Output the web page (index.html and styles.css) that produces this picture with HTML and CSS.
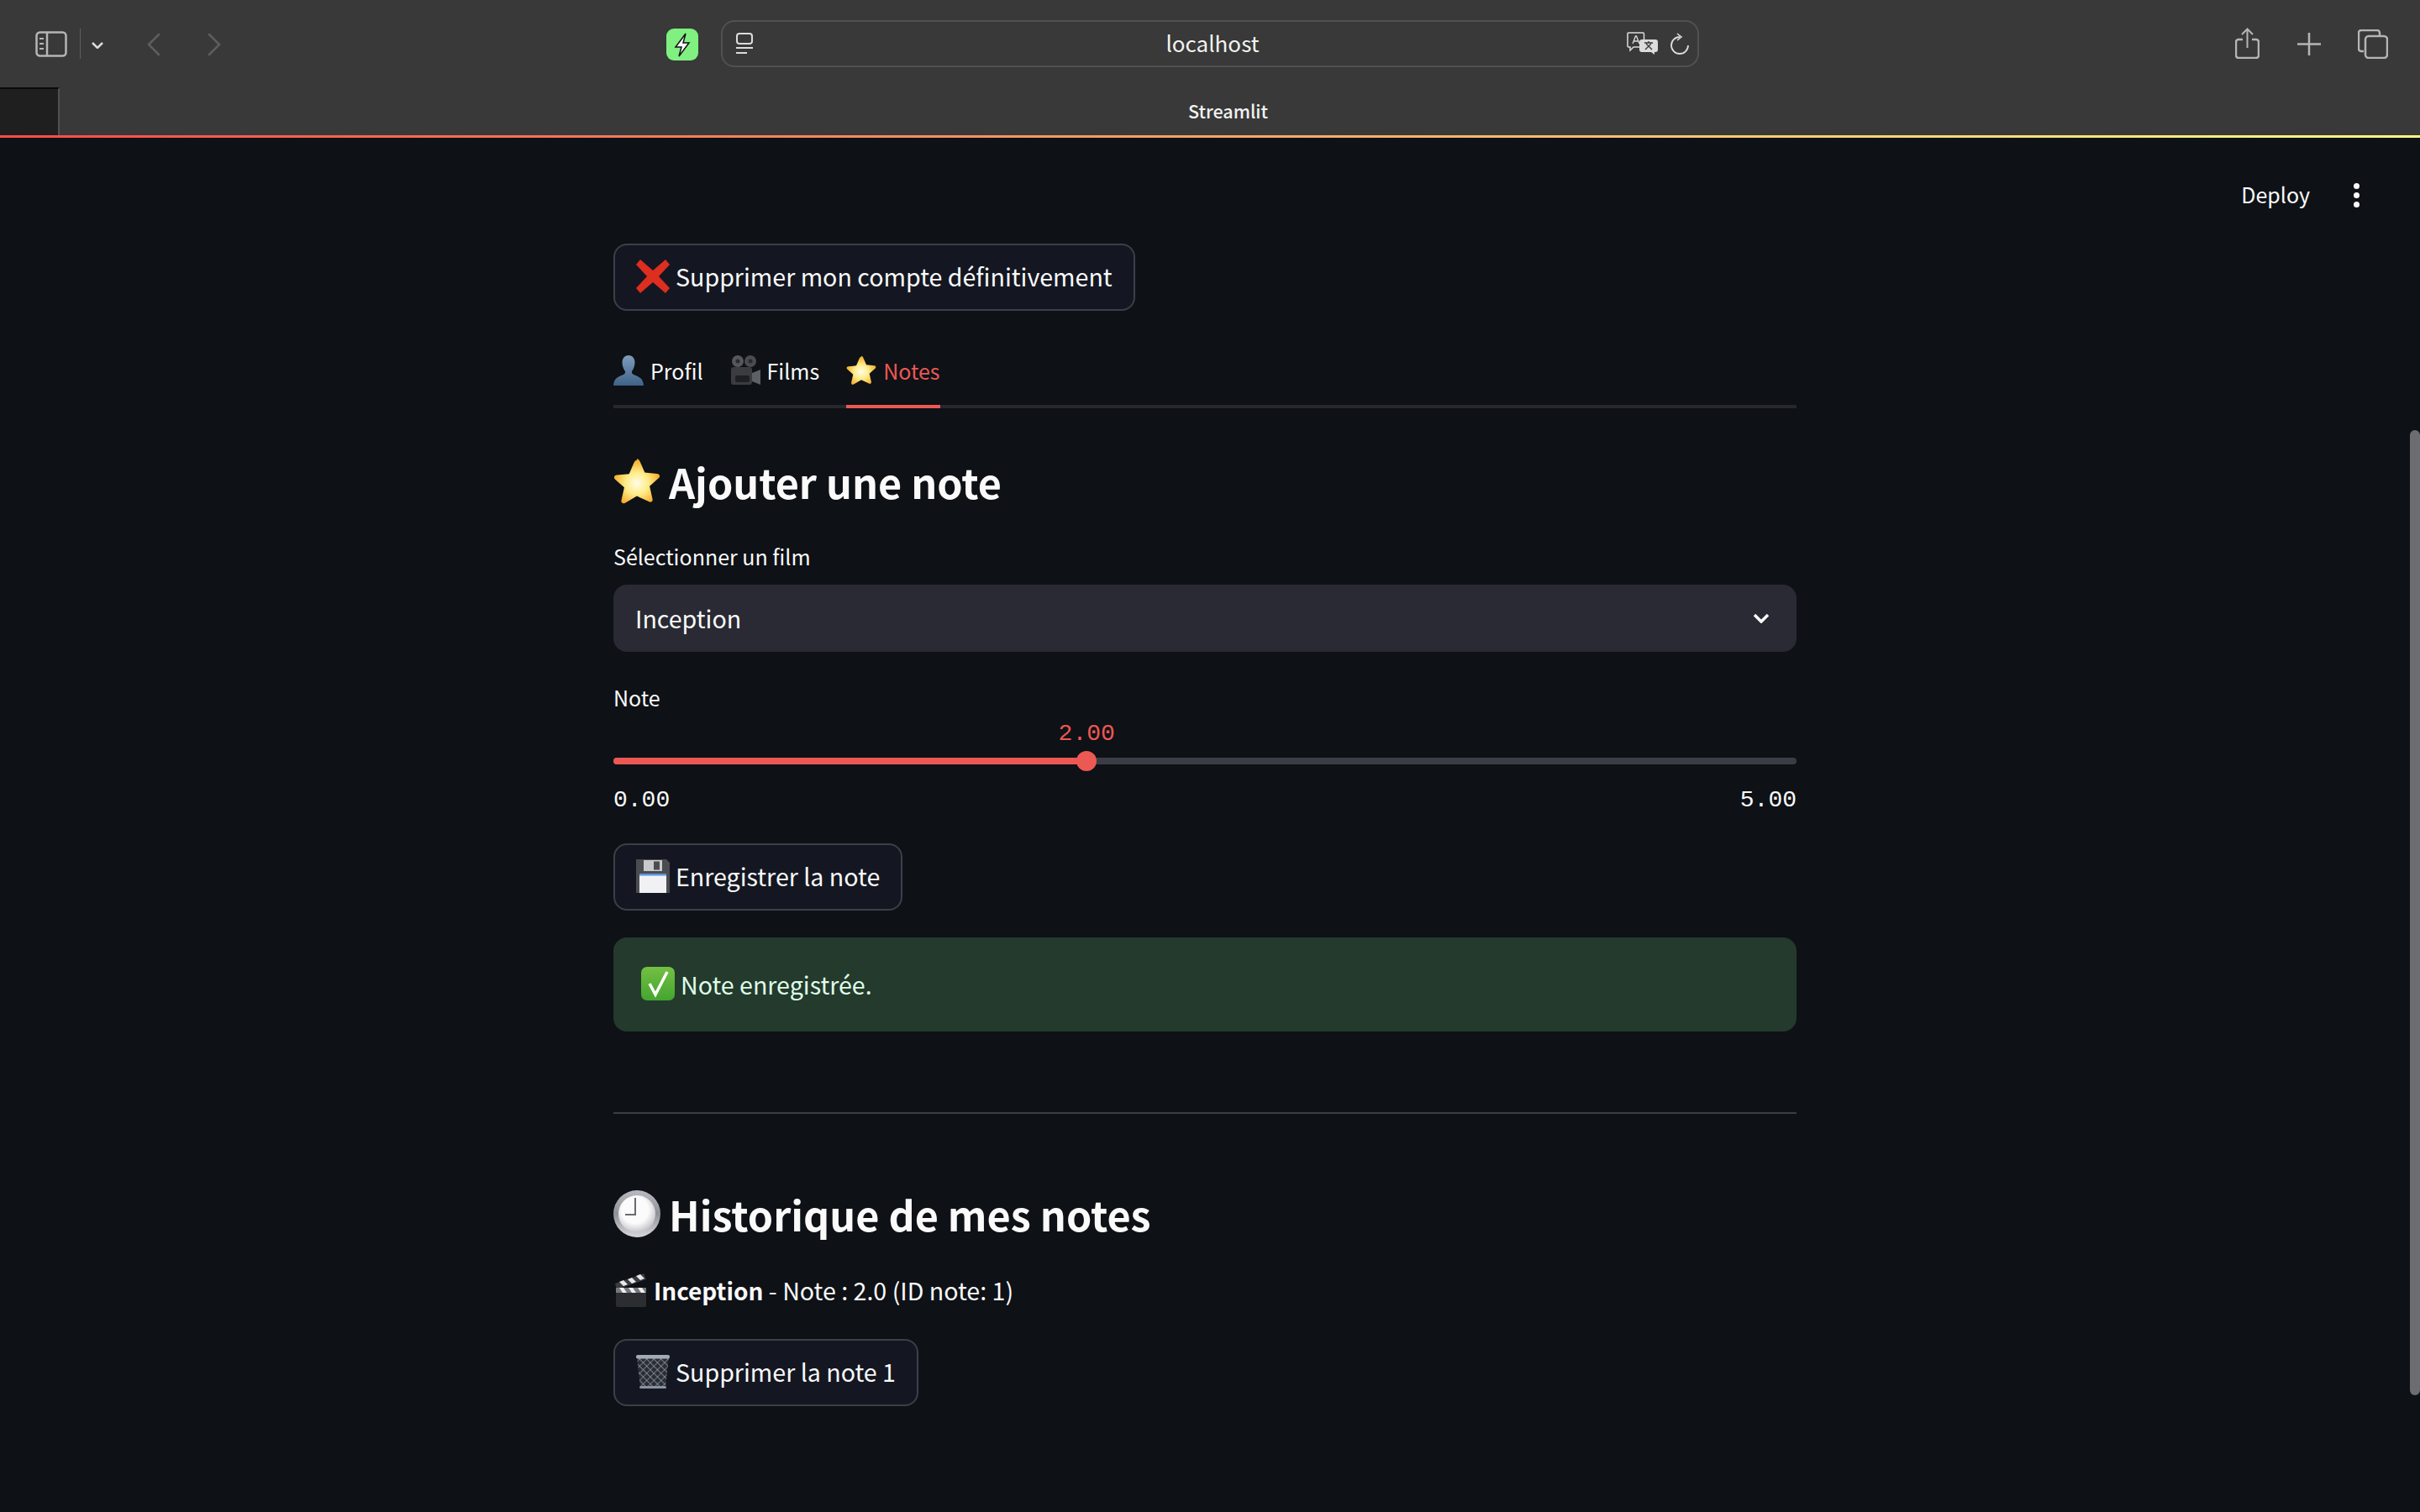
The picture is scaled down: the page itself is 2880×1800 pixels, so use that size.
FILE: index.html
```html
<!DOCTYPE html>
<html lang="fr">
<head>
    <meta charset="UTF-8">
    <title>Streamlit</title>
    <link rel="stylesheet" href="styles.css">
</head>
<body>
    <svg class="defs" width="0" height="0">
        <defs>
            <radialGradient id="starFill" cx="50%" cy="55%" r="55%">
                <stop offset="0" stop-color="#fffde8"/>
                <stop offset="0.45" stop-color="#ffec8a"/>
                <stop offset="1" stop-color="#f2a51e"/>
            </radialGradient>
            <linearGradient id="personFill" x1="0" y1="0" x2="0" y2="1">
                <stop offset="0" stop-color="#7f9dbd"/>
                <stop offset="1" stop-color="#3f6288"/>
            </linearGradient>
            <linearGradient id="clockRim" x1="0" y1="0" x2="0" y2="1">
                <stop offset="0" stop-color="#b9bbc2"/>
                <stop offset="0.5" stop-color="#8f9198"/>
                <stop offset="1" stop-color="#d8d8dc"/>
            </linearGradient>
            <radialGradient id="clockFace" cx="45%" cy="40%" r="60%">
                <stop offset="0.6" stop-color="#fbfbfb"/>
                <stop offset="1" stop-color="#c8c8cc"/>
            </radialGradient>
            <linearGradient id="checkFill" x1="0" y1="0" x2="0" y2="1">
                <stop offset="0" stop-color="#74c043"/>
                <stop offset="1" stop-color="#43a52f"/>
            </linearGradient>
            <symbol id="star" viewBox="0 0 36 36">
                <path d="M18 .8c1.100 0 1.800.9 2.300 2l3.700 8.500 9.400.9c2 .2 2.700 2 1.300 3.300l-7 6.200 2.200 9.800c.4 1.900-1.200 3-2.900 2L18 29.300 9 34.500c-1.700 1-3.300-.1-2.900-2l2.200-9.800-7-6.200c-1.400-1.300-.7-3.100 1.300-3.300l9.400-.9 3.700-8.500c.5-1.100 1.200-2 2.300-2z" fill="url(#starFill)"/>
            </symbol>
            <symbol id="cross" viewBox="0 0 40 40">
                <path d="M5 0l15 13L35 0l5 6-13 14 13 14-5 6-15-13L5 40l-5-6 13-14L0 6z" fill="#dd2e1f"/>
            </symbol>
            <symbol id="person" viewBox="0 0 36 36">
                <path d="M18 0c4.800 0 7.500 3.700 7.500 8.500 0 4.500-2 8.500-3.500 10.500-.5 2.500 1 3.500 4 4.800 5 2 9.500 4.200 10 12.200H0c.5-8 5-10.200 10-12.200 3-1.300 4.500-2.300 4-4.800-1.500-2-3.500-6-3.500-10.500C10.500 3.700 13.200 0 18 0z" fill="url(#personFill)"/>
            </symbol>
            <symbol id="camera" viewBox="0 0 36 36">
                <circle cx="9" cy="7" r="7" fill="#55575c"/>
                <circle cx="24" cy="7" r="7" fill="#4a4c50"/>
                <circle cx="9" cy="7" r="2.500" fill="#2a2b2e"/>
                <circle cx="24" cy="7" r="2.500" fill="#2a2b2e"/>
                <rect x="1" y="14" width="25" height="21" rx="3" fill="#3a3c40"/>
                <rect x="6" y="24" width="17" height="8" rx="2" fill="#1f2023"/>
                <path d="M26 21l10-4v18l-10-4z" fill="#5d6064"/>
            </symbol>
            <symbol id="floppy" viewBox="0 0 40 40">
                <path d="M0 0h36l4 4v36H0z" fill="#4b4c50"/>
                <rect x="9" y="1" width="22" height="13" fill="#c9c9cc"/>
                <rect x="21" y="2.500" width="7" height="10" fill="#4b4c50"/>
                <rect x="4" y="17" width="32" height="23" fill="#f1f1f3"/>
                <rect x="4" y="17" width="32" height="2.500" fill="#5b95dd"/>
            </symbol>
            <symbol id="check" viewBox="0 0 40 40">
                <rect width="40" height="40" rx="7" fill="url(#checkFill)"/>
                <path d="M10 20l7 13L31 6" fill="none" stroke="#fff" stroke-width="3.500"/>
            </symbol>
            <symbol id="clock" viewBox="0 0 56 56">
                <circle cx="28" cy="28" r="28" fill="url(#clockRim)"/>
                <circle cx="28" cy="28" r="22" fill="url(#clockFace)"/>
                <path d="M26 9v20H14" fill="none" stroke="#6a6a70" stroke-width="2"/>
            </symbol>
            <symbol id="clapper" viewBox="0 0 40 40">
                <path d="M1 12L35 0l3 7L3 19z" fill="#3a3b3e"/>
                <path d="M6 10l5-2 5 5-5 2zM16 7l5-2 5 5-5 2zM26 3l5-2 5 5-5 2z" fill="#e8e8e8"/>
                <rect x="2" y="17" width="36" height="23" rx="2" fill="#2c2d30"/>
                <path d="M2 17h36v6H2z" fill="#77787c"/>
                <path d="M6 17h5l4 6h-5zM17 17h5l4 6h-5zM28 17h5l4 6h-5z" fill="#eeeeee"/>
            </symbol>
            <pattern id="mesh" width="6" height="6" patternUnits="userSpaceOnUse" patternTransform="rotate(45)">
                <rect width="6" height="6" fill="#2c2e35"/>
                <path d="M0 0h6M0 0v6" stroke="#929cab" stroke-width="1.300"/>
            </pattern>
            <symbol id="trash" viewBox="0 0 40 40">
                <path d="M1 3h38l-4 35c0 1-1 2-2 2H7c-1 0-2-1-2-2z" fill="url(#mesh)"/>
                <rect x="0" y="0" width="40" height="4.500" rx="2" fill="#a3abb8"/>
                <rect x="4" y="37" width="32" height="3" rx="1.500" fill="#8992a0"/>
            </symbol>
        </defs>
    </svg>

    <header class="browser">
        <div class="browser-top">
            <svg class="ico-sidebar" viewBox="0 0 38 31" fill="none" stroke="#b4b5b4" stroke-width="2.500">
                <rect x="1.500" y="1.500" width="35" height="28" rx="4"/>
                <path d="M14 2v27"/>
                <path d="M5 9h5M5 15h5M5 21h5" stroke-width="2.200"/>
            </svg>
            <span class="sep"></span>
            <svg class="ico-chevron" viewBox="0 0 14 8" fill="none" stroke="#dcdcdc" stroke-width="2.500">
                <path d="M1 1l6 6 6-6"/>
            </svg>
            <svg class="ico-back" viewBox="0 0 16 28" fill="none" stroke="#5e5f5e" stroke-width="2.500" stroke-linecap="round">
                <path d="M14 2L2 14l12 12"/>
            </svg>
            <svg class="ico-forward" viewBox="0 0 16 28" fill="none" stroke="#5e5f5e" stroke-width="2.500" stroke-linecap="round">
                <path d="M2 2l12 12L2 26"/>
            </svg>
            <svg class="ico-favicon" viewBox="0 0 38 38">
                <rect width="38" height="38" rx="9" fill="#80f080"/>
                <path d="M23 6L11 22h7l-3 11 12-16h-7z" fill="#fff" stroke="#111" stroke-width="1.500"/>
            </svg>
            <div class="address">
                <svg class="ico-reader" viewBox="0 0 20 25" fill="none" stroke="#dcdcdc" stroke-width="2">
                    <rect x="1" y="1" width="18" height="12" rx="3"/>
                    <path d="M0 18h20M0 24h13"/>
                </svg>
                <span class="url">localhost</span>
                <svg class="ico-translate" viewBox="0 0 37 27">
                    <path d="M2 1h17a1.500 1.500 0 0 1 1.500 1.500V18H8l-4 4v-4H2A1 1 0 0 1 1 17V2a1 1 0 0 1 1-1z" fill="#383938" stroke="#dcdcdc" stroke-width="1.500"/>
                    <path d="M7 14l3.500-9h1L15 14M8.500 11h5" fill="none" stroke="#dcdcdc" stroke-width="1.300"/>
                    <path d="M18 9h16a3 3 0 0 1 3 3v9a3 3 0 0 1-3 3h-1v3l-4-3H18a3 3 0 0 1-3-3v-9a3 3 0 0 1 3-3z" fill="#dcdcdc"/>
                    <path d="M21 13h10M26 11v2M23 14l7 7M29 14l-7 7" fill="none" stroke="#383938" stroke-width="1.400"/>
                </svg>
                <svg class="ico-reload" viewBox="0 0 22 26" fill="none" stroke="#dcdcdc" stroke-width="1.800">
                    <path d="M11 5a10 10 0 1 0 10 10"/>
                    <path d="M8 1l5 4-5 4" stroke-width="1.600"/>
                </svg>
            </div>
            <svg class="ico-share" viewBox="0 0 29 37" fill="none" stroke="#b4b5b4" stroke-width="2.500">
                <path d="M9 14H4a3 3 0 0 0-3 3v16a3 3 0 0 0 3 3h21a3 3 0 0 0 3-3V17a3 3 0 0 0-3-3h-5"/>
                <path d="M14.500 24V2M8 8l6.500-6.500L21 8" stroke-width="2"/>
            </svg>
            <svg class="ico-plus" viewBox="0 0 28 27" stroke="#b4b5b4" stroke-width="2.500">
                <path d="M14 0v27M0 13.500h28"/>
            </svg>
            <svg class="ico-tabs" viewBox="0 0 36 35" fill="none" stroke="#b4b5b4" stroke-width="2.500">
                <path d="M7 26H4a3 3 0 0 1-3-3V4a3 3 0 0 1 3-3h19a3 3 0 0 1 3 3v3"/>
                <rect x="9" y="8" width="26" height="26" rx="4"/>
            </svg>
        </div>
        <div class="browser-tabs">
            <div class="tab-dark"></div>
            <div class="tab-title">Streamlit</div>
        </div>
    </header>
    <div class="decoration"></div>

    <div class="toolbar">
        <span class="deploy">Deploy</span>
        <span class="kebab"><i></i><i></i><i></i></span>
    </div>

    <main class="content">
        <button class="btn"><svg class="emoji emoji-btn"><use href="#cross"/></svg>Supprimer mon compte définitivement</button>

        <nav class="tabs">
            <a class="tab"><svg class="emoji emoji-tab"><use href="#person"/></svg>Profil</a>
            <a class="tab"><svg class="emoji emoji-tab"><use href="#camera"/></svg>Films</a>
            <a class="tab active"><svg class="emoji emoji-tab"><use href="#star"/></svg>Notes</a>
        </nav>

        <h2 class="heading first"><svg class="emoji emoji-h"><use href="#star"/></svg>Ajouter une note</h2>

        <label class="field-label select-label">Sélectionner un film</label>
        <div class="select">
            <span>Inception</span>
            <svg class="select-arrow" viewBox="0 0 20 12" fill="none" stroke="#fafafa" stroke-width="3.500">
                <path d="M2 2l8 8 8-8"/>
            </svg>
        </div>

        <label class="field-label note-label">Note</label>
        <div class="slider">
            <div class="track">
                <div class="track-fill" style="width: 40%"></div>
                <span class="thumb" style="left: 40%"></span>
                <span class="thumb-value" style="left: 40%">2.00</span>
            </div>
            <div class="slider-ends">
                <span>0.00</span>
                <span>5.00</span>
            </div>
        </div>

        <button class="btn btn-save"><svg class="emoji emoji-btn"><use href="#floppy"/></svg>Enregistrer la note</button>

        <div class="alert"><svg class="emoji emoji-btn"><use href="#check"/></svg>Note enregistrée.</div>

        <hr class="divider">

        <h2 class="heading second"><svg class="emoji emoji-h"><use href="#clock"/></svg>Historique de mes notes</h2>

        <p class="note-line"><svg class="emoji emoji-btn"><use href="#clapper"/></svg><strong>Inception</strong>&nbsp;- Note : 2.0 (ID note: 1)</p>

        <button class="btn btn-delete"><svg class="emoji emoji-btn"><use href="#trash"/></svg>Supprimer la note 1</button>
    </main>

    <div class="scrollbar"></div>
</body>
</html>
```

FILE: styles.css
```css
* {
    box-sizing: border-box;
}

html, body {
    margin: 0;
    height: 100%;
    overflow: hidden;
}

body {
    position: relative;
    background-color: #0e1116;
    color: #fafafa;
    font-family: "Noto Sans CJK SC", "Noto Sans", sans-serif;
    font-size: 28.6px;
}

.defs {
    position: absolute;
}

/* Safari */
.browser {
    height: 161px;
    background-color: #383938;
}

.browser-top {
    height: 104px;
    display: flex;
    align-items: center;
    padding-left: 42px;
}

.browser-top svg {
    flex: none;
}

.ico-sidebar { width: 38px; height: 31px; margin-top: 1px; }
.sep { width: 1px; height: 36px; margin-left: 15px; background-color: #5e5f5e; }
.ico-chevron { width: 14px; height: 8px; margin-left: 13px; margin-top: 3px; }
.ico-back { width: 16px; height: 28px; margin-left: 52px; margin-top: 1px; }
.ico-forward { width: 16px; height: 28px; margin-left: 56px; margin-top: 1px; }
.ico-favicon { width: 38px; height: 38px; margin-left: 530px; margin-top: 1px; }

.address {
    width: 1164px;
    height: 56px;
    margin-left: 27px;
    padding: 0 10px 0 16px;
    display: flex;
    align-items: center;
    border: 2px solid #505150;
    border-radius: 16px;
    margin-top: -1px;
}

.url {
    flex: 1;
    text-align: center;
    font-size: 26px;
    color: #f2f2f2;
    padding-left: 54px;
    padding-bottom: 2px;
}

.ico-reader { width: 20px; height: 25px; }
.ico-translate { width: 37px; height: 27px; }
.ico-reload { width: 22px; height: 26px; margin-left: 15px; }
.ico-share { width: 29px; height: 37px; margin-left: 638px; margin-top: -2px; }
.ico-plus { width: 28px; height: 27px; margin-left: 45px; margin-top: 1px; }
.ico-tabs { width: 36px; height: 35px; margin-left: 44px; }

.browser-tabs {
    height: 57px;
    display: flex;
    position: relative;
}

.tab-dark {
    width: 71px;
    background-color: #1e1f1e;
    border-top: 2px solid #0a0a0a;
    border-right: 2px solid #505150;
}

.tab-title {
    flex: 1;
    padding-right: 28px;
    text-align: center;
    font-size: 21.5px;
    line-height: 56px;
    color: #f2f2f2;
    font-weight: 500;
}

.decoration {
    height: 3px;
    background: linear-gradient(90deg, #ff4b4b, #fffd80);
}

/* Streamlit */
.toolbar {
    position: absolute;
    top: 209px;
    right: 72px;
    display: flex;
    align-items: center;
    height: 44px;
    font-size: 25px;
}

.deploy {
    margin-right: 52px;
}

.kebab {
    display: flex;
    flex-direction: column;
    gap: 4px;
    margin-top: 2px;
}

.kebab i {
    width: 7px;
    height: 7px;
    border-radius: 50%;
    background-color: #fafafa;
}

.content {
    width: 1408px;
    margin-left: 730px;
    padding-top: 126px;
    display: flex;
    flex-direction: column;
    align-items: flex-start;
}

.emoji {
    flex: none;
}

.emoji-btn {
    width: 40px;
    height: 40px;
    margin-right: 7px;
}

.emoji-tab {
    width: 36px;
    height: 36px;
    margin-right: 8px;
}

.emoji-h {
    width: 56px;
    height: 56px;
    margin-right: 10px;
}

.btn {
    height: 80px;
    padding: 0 25px 3px 25px;
    display: flex;
    align-items: center;
    background-color: #141722;
    border: 2px solid #3d3f48;
    border-radius: 16px;
    color: #fafafa;
    font: inherit;
}

.tabs {
    width: 100%;
    margin-top: 34px;
    display: flex;
    gap: 32px;
    border-bottom: 4px solid #26272f;
}

.tab {
    height: 82px;
    margin-bottom: -4px;
    padding-bottom: 4px;
    display: flex;
    align-items: center;
    font-size: 25px;
    border-bottom: 4px solid transparent;
}

.tab.active {
    color: #ec5854;
    border-bottom-color: #ec5854;
}

.heading {
    height: 70px;
    margin: 0;
    padding-bottom: 4px;
    display: flex;
    align-items: center;
    font-size: 48.5px;
    font-weight: 700;
    line-height: 66px;
}

.heading.first {
    margin-top: 54px;
}

.heading.second {
    margin-top: 86px;
}

.field-label {
    height: 40px;
    font-size: 25px;
    line-height: 37px;
}

.select-label {
    margin-top: 34px;
}

.note-label {
    margin-top: 36px;
}

.select {
    width: 100%;
    height: 80px;
    margin-top: 12px;
    padding: 0 24px 2px 26px;
    display: flex;
    align-items: center;
    justify-content: space-between;
    background-color: #292a33;
    border-radius: 16px;
}

.select-arrow {
    width: 20px;
    height: 12px;
    margin-right: 8px;
    margin-top: 2px;
}

.slider {
    width: 100%;
    margin-top: 50px;
}

.track {
    position: relative;
    height: 8px;
    background-color: #3b3d46;
    border-radius: 4px;
}

.track-fill {
    height: 100%;
    background-color: #ec5854;
    border-radius: 4px;
}

.thumb {
    position: absolute;
    top: -8px;
    width: 24px;
    height: 24px;
    margin-left: -12px;
    background-color: #ec5854;
    border-radius: 50%;
}

.thumb-value {
    position: absolute;
    top: -43px;
    transform: translateX(-50%);
    font-family: "Liberation Mono", monospace;
    font-size: 28px;
    line-height: 30px;
    color: #ec5854;
}

.slider-ends {
    margin-top: 25px;
    display: flex;
    justify-content: space-between;
    font-family: "Liberation Mono", monospace;
    font-size: 28px;
    line-height: 36px;
}

.btn-save {
    margin-top: 33px;
}

.alert {
    width: 100%;
    height: 112px;
    margin-top: 32px;
    padding: 0 0 2px 33px;
    display: flex;
    align-items: center;
    background-color: #243a2c;
    border-radius: 16px;
    color: #dffde9;
}

.divider {
    width: 100%;
    height: 2px;
    margin: 96px 0 0;
    border: 0;
    background-color: #3b3d46;
}

.note-line {
    height: 48px;
    margin: 31px 0 0;
    padding-bottom: 2px;
    display: flex;
    align-items: center;
    line-height: 46px;
}

.note-line strong {
    font-size: 28px;
}

.note-line .emoji-btn {
    margin-left: 1px;
}

.btn-delete {
    margin-top: 33px;
}

.scrollbar {
    position: absolute;
    top: 512px;
    right: 0;
    width: 12px;
    height: 1149px;
    background-color: #6b6d70;
    border-radius: 6px;
}
```
